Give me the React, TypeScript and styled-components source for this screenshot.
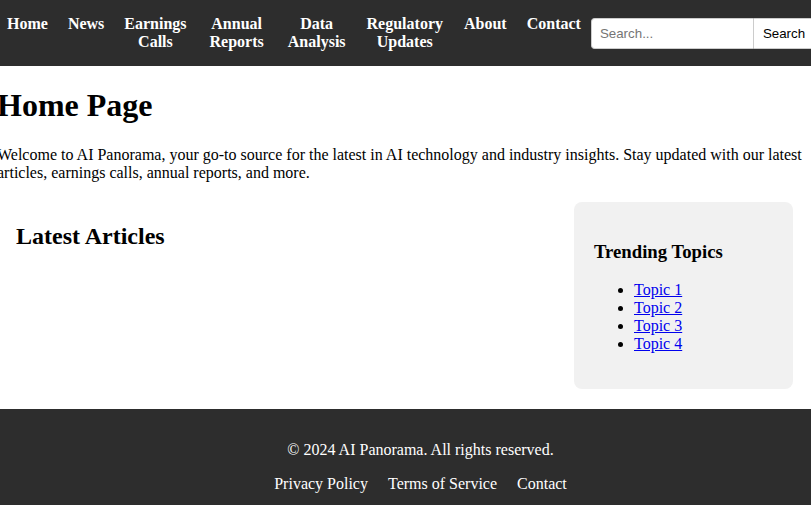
import React from "react";
import styled, { createGlobalStyle } from "styled-components";

const Global = createGlobalStyle`
  html, body {
    margin: 0;
    padding: 0;
    overflow: hidden;
    background: #ffffff;
  }
  body {
    font-family: "Liberation Serif", "Times New Roman", serif;
    font-size: 16px;
    line-height: 1.15;
    color: #000000;
  }
`;

const Page = styled.div`
  width: 847px;
  margin-left: -3px;
`;

const Header = styled.header`
  background: #2d2d2d;
  display: flex;
  align-items: center;
  padding: 15px 0;
`;

const NavList = styled.ul`
  display: flex;
  align-items: flex-start;
  list-style: none;
  margin: 0;
  padding: 0;
`;

const NavItem = styled.li<{ $extra?: number }>`
  padding: 0 ${(p) => 10 + (p.$extra ?? 0)}px 0 10px;
`;

const NavLink = styled.a`
  display: block;
  width: min-content;
  color: #ffffff;
  font-weight: bold;
  text-decoration: none;
  text-align: center;
  line-height: 18px;
`;

const SearchForm = styled.form`
  display: flex;
  margin-left: 0;
`;

const SearchInput = styled.input`
  box-sizing: border-box;
  width: 162px;
  height: 31px;
  padding: 0 8px;
  border: 1px solid #cccccc;
  border-right: none;
  border-radius: 4px 0 0 4px;
  font-family: "Liberation Sans", Arial, sans-serif;
  font-size: 13.33px;
  outline: none;
  &::placeholder {
    color: #757575;
  }
`;

const SearchButton = styled.button`
  box-sizing: border-box;
  height: 31px;
  padding: 0 9px;
  border: 1px solid #cccccc;
  border-radius: 0 4px 4px 0;
  background: #ffffff;
  color: #000000;
  font-family: "Liberation Sans", Arial, sans-serif;
  font-size: 13.33px;
`;

const Main = styled.main`
  width: 816px;
`;

const Title = styled.h1`
  font-size: 32px;
  margin: 21.44px 0;
`;

const Intro = styled.p`
  margin: 16px 0;
`;

const Layout = styled.div`
  display: flex;
  align-items: flex-start;
  margin: 20px 20px 20px 0;
`;

const Articles = styled.section`
  flex: 1;
  padding: 0 19px;
`;

const SectionTitle = styled.h2`
  font-size: 24px;
  margin: 20.5px 0;
`;

const Sidebar = styled.aside`
  box-sizing: border-box;
  flex: 0 0 219px;
  background: #f1f1f1;
  border-radius: 8px;
  padding: 20px;
`;

const SidebarTitle = styled.h3`
  font-size: 18.72px;
  margin: 18.72px 0;
`;

const TopicList = styled.ul`
  margin: 16px 0;
  padding-left: 40px;
`;

const Topic = styled.li`
  line-height: 18px;
`;

const TopicLink = styled.a`
  color: #0000ee;
  text-decoration: underline;
`;

const Footer = styled.footer`
  background: #2d2d2d;
  color: #ffffff;
  text-align: center;
  padding: 16px 0;
`;

const FooterText = styled.p`
  margin: 16px 0;
  line-height: 18px;
`;

const FooterLinks = styled.div`
  line-height: 18px;
`;

const FooterLink = styled.a`
  color: #ffffff;
  text-decoration: none;
  margin: 0 10px;
`;

const navItems: { label: string; extra?: number }[] = [
  { label: "Home" },
  { label: "News" },
  { label: "Earnings Calls", extra: 3 },
  { label: "Annual Reports", extra: 4 },
  { label: "Data Analysis", extra: 1 },
  { label: "Regulatory Updates", extra: 1 },
  { label: "About" },
  { label: "Contact" },
];

const topics = ["Topic 1", "Topic 2", "Topic 3", "Topic 4"];

export default function App() {
  return (
    <>
      <Global />
      <Page>
        <Header>
          <nav>
            <NavList>
              {navItems.map((item) => (
                <NavItem key={item.label} $extra={item.extra}>
                  <NavLink href="#">{item.label}</NavLink>
                </NavItem>
              ))}
            </NavList>
          </nav>
          <SearchForm onSubmit={(e) => e.preventDefault()}>
            <SearchInput type="text" placeholder="Search..." />
            <SearchButton type="submit">Search</SearchButton>
          </SearchForm>
        </Header>
        <Main>
          <Title>Home Page</Title>
          <Intro>
            Welcome to AI Panorama, your go-to source for the latest in AI technology and
            industry insights. Stay updated with our latest articles, earnings calls, annual
            reports, and more.
          </Intro>
          <Layout>
            <Articles>
              <SectionTitle>Latest Articles</SectionTitle>
            </Articles>
            <Sidebar>
              <SidebarTitle>Trending Topics</SidebarTitle>
              <TopicList>
                {topics.map((t) => (
                  <Topic key={t}>
                    <TopicLink href="#">{t}</TopicLink>
                  </Topic>
                ))}
              </TopicList>
            </Sidebar>
          </Layout>
        </Main>
        <Footer>
          <FooterText>© 2024 AI Panorama. All rights reserved.</FooterText>
          <FooterLinks>
            <FooterLink href="#">Privacy Policy</FooterLink>
            <FooterLink href="#">Terms of Service</FooterLink>
            <FooterLink href="#">Contact</FooterLink>
          </FooterLinks>
        </Footer>
      </Page>
    </>
  );
}
